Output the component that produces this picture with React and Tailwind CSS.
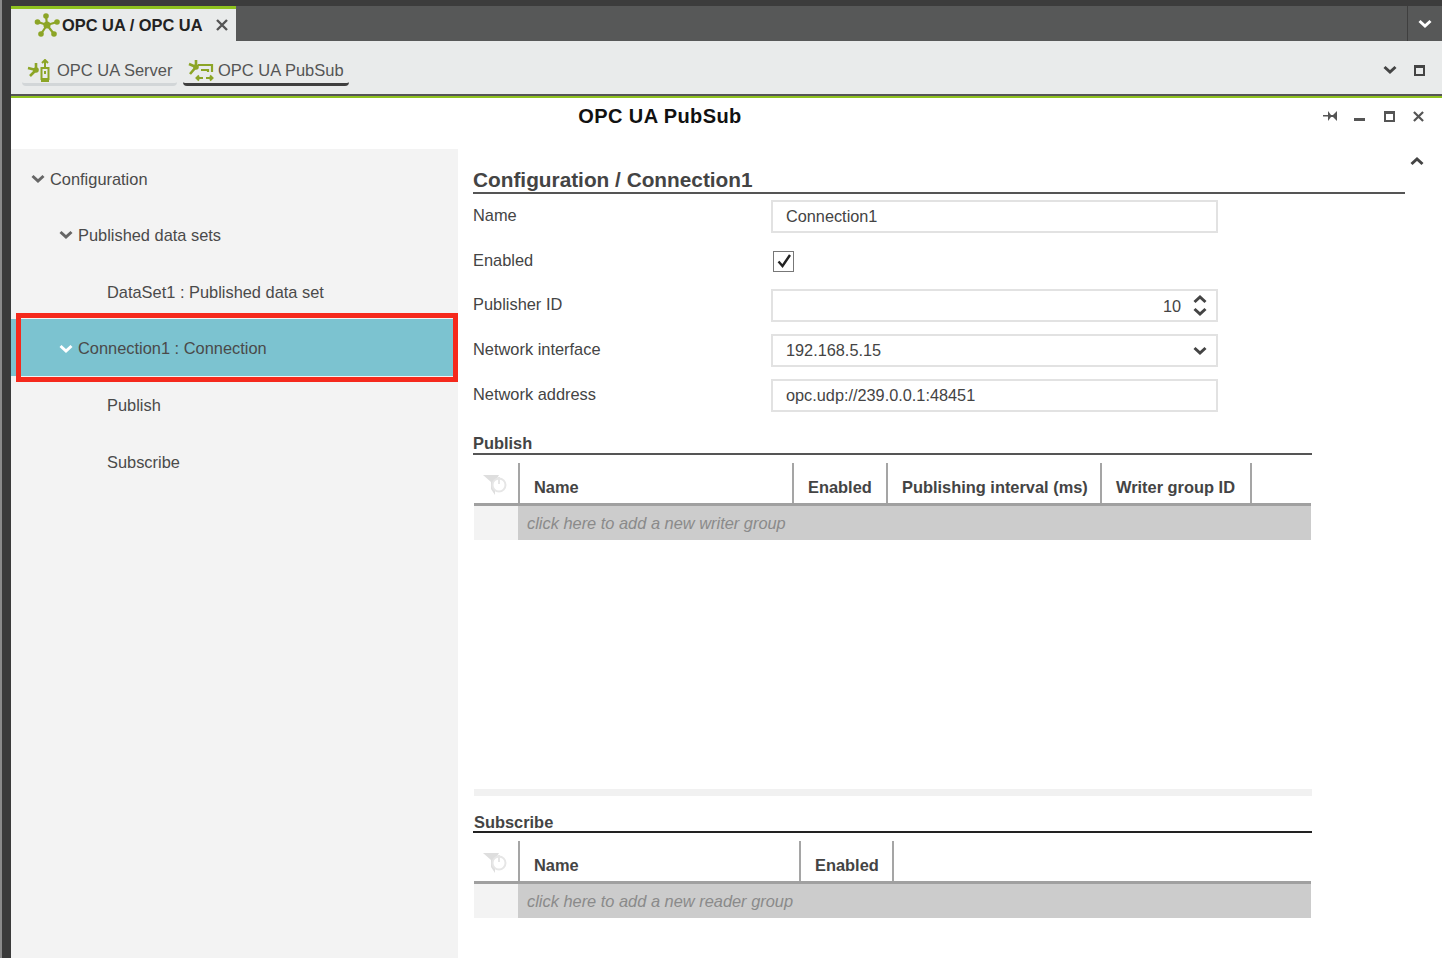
import React from 'react';

const Chev = ({ up, className }) => (
  <svg viewBox="0 0 14 10" className={className} fill="none" stroke="currentColor" strokeWidth="3">
    <path d={up ? 'M1.5 8 L7 3 L12.5 8' : 'M1.5 2 L7 7 L12.5 2'} />
  </svg>
);

const HubIcon = () => (
  <svg viewBox="0 0 26 26" className="w-[26px] h-[26px]" fill="none" stroke="#8ca526" strokeWidth="2.2">
    <path d="M13 13 L12 4 M13 13 L4 10 M13 13 L23 10 M13 13 L7 22 M13 13 L20 22" />
    <g fill="#8ca526" stroke="none">
      <circle cx="13" cy="13" r="3.6" />
      <circle cx="12" cy="4" r="2.8" />
      <circle cx="3.5" cy="10" r="2.8" />
      <circle cx="23" cy="10" r="2.8" />
      <circle cx="7" cy="22" r="2.8" />
      <circle cx="20" cy="22" r="2.8" />
    </g>
  </svg>
);

const ServerIcon = () => (
  <svg viewBox="0 0 24 24" className="w-6 h-6" fill="none" stroke="#8ca526" strokeWidth="2">
    <path d="M1 9 L9 11 M3 17 L9 11 M9 11 V4" strokeWidth="2.6" />
    <circle cx="9" cy="11" r="2.8" fill="#8ca526" stroke="none" />
    <path d="M18 8 V2 M15 4 L18 1 L21 4" />
    <rect x="14.5" y="9" width="7" height="11" />
    <path d="M18 12 V15 M14 22 H22" />
  </svg>
);

const PubSubIcon = () => (
  <svg viewBox="0 0 26 24" className="w-[26px] h-6" fill="none" stroke="#8ca526" strokeWidth="2.2">
    <path d="M1 5 L8 8 M8 1 V8 M2 15 L8 8" strokeWidth="2.6" />
    <circle cx="8" cy="8" r="2.8" fill="#8ca526" stroke="none" />
    <path d="M10 6 H24 V13 M13 11 H20 V13" />
    <path d="M9 19 H15 M11 16.5 L8.5 19 L11 21.5 M18 19 H24 M22 16.5 L24.5 19 L22 21.5" strokeWidth="2" />
  </svg>
);

const FilterIcon = () => (
  <svg viewBox="0 0 24 24" className="w-6 h-6" fill="none">
    <path d="M0 2 H16 L12 9 V22 L8 16 V9 Z" fill="#dedede" />
    <circle cx="16" cy="12" r="6.5" stroke="#e6e6e6" strokeWidth="2" fill="#fff" />
    <path d="M16 4 V11" stroke="#e6e6e6" strokeWidth="2" />
  </svg>
);

const treeRows = [
  { label: 'Configuration', indent: 'pl-[20px]', chev: true },
  { label: 'Published data sets', indent: 'pl-[48px]', chev: true },
  { label: 'DataSet1 : Published data set', indent: 'pl-[96px]' },
  { label: 'Connection1 : Connection', indent: 'pl-[48px]', chev: true, active: true },
  { label: 'Publish', indent: 'pl-[96px]' },
  { label: 'Subscribe', indent: 'pl-[96px]' },
];

const Label = ({ children }) => (
  <div className="w-[298px] text-[16.4px] text-[#444] leading-[20px] mt-[5px]">{children}</div>
);

const boxClass = 'w-[447px] h-[33px] border-2 border-[#e2e2e2] flex items-center px-[13px] text-[16.3px] text-[#444]';

const Table = ({ cols, hint, gap }) => (
  <div className="w-[837px] ml-px">
    <div className={`flex h-[40px] ${gap}`}>
      <div className="w-[44px] flex pl-[9px] pt-[10px]">
        <FilterIcon />
      </div>
      {cols.map((c) => (
        <div
          key={c.name}
          style={{ width: c.w }}
          className="border-l-2 border-[#a5a5a5] pl-[14px] pt-[14px] text-[16.4px] font-bold text-[#444] leading-[20px] whitespace-nowrap last:border-r-2"
        >
          {c.name}
        </div>
      ))}
    </div>
    <div className="h-[3px] bg-[#a0a0a0]" />
    <div className="flex h-[34px]">
      <div className="w-[44px] bg-[#f3f3f3]" />
      <div className="flex-1 bg-[#cccccc] pl-[9px] flex items-center italic text-[16.4px] text-[#8a8a8a]">{hint}</div>
    </div>
  </div>
);

export default function App() {
  return (
    <div className="w-[1442px] h-[958px] flex overflow-hidden bg-white font-['Liberation_Sans',Arial,sans-serif]">
      <div className="w-[11px] shrink-0 bg-[#3a3a3a] border-l-2 border-[#8a8a8a]" />
      <div className="flex-1 flex flex-col min-w-0 relative">
        {/* tab bar */}
        <div className="h-[41px] shrink-0 flex flex-col bg-[#3c3c3c]">
          <div className="h-[6px] shrink-0" />
          <div className="flex-1 flex bg-[#575858]">
            <div className="w-[225px] bg-[#e9ebeb] border-t-[3px] border-[#8fc31f] flex items-center pl-[23px]">
              <HubIcon />
              <span className="text-[16.4px] font-bold text-[#222] ml-[2px] whitespace-nowrap">OPC UA / OPC UA</span>
              <svg viewBox="0 0 12 12" className="w-3 h-3 ml-[13px] text-[#555]" stroke="currentColor" strokeWidth="2.4">
                <path d="M1 1 L11 11 M11 1 L1 11" />
              </svg>
            </div>
            <div className="flex-1" />
            <div className="w-[35px] border-l border-[#3f3f3f] flex items-center justify-center text-white">
              <Chev className="w-[14px] h-[10px]" />
            </div>
          </div>
        </div>

        {/* toolbar */}
        <div className="h-[53px] shrink-0 flex items-start bg-[#e9ebeb] pl-[11px] pr-[17px] pt-[3px]">
          <div className="w-[155px] h-[42px] flex items-center pl-[5px] pt-[14px] border-b-[3px] border-[#d2d6d8] text-[16.5px] text-[#555] rounded-sm">
            <ServerIcon />
            <span className="ml-[6px] whitespace-nowrap">OPC UA Server</span>
          </div>
          <div className="w-[166px] h-[42px] ml-[6px] flex items-center pl-[5px] pt-[14px] border-b-[3px] border-[#3f3f3f] text-[16.5px] text-[#555] rounded-sm">
            <PubSubIcon />
            <span className="ml-[4px] whitespace-nowrap">OPC UA PubSub</span>
          </div>
          <div className="flex-1" />
          <Chev className="w-[14px] h-[10px] text-[#444] mt-[21px] -translate-x-px" />
          <div className="w-[11px] h-[11px] ml-[16px] mt-[21px] border-2 border-t-[3px] border-[#444]" />
        </div>
        <div className="h-[2px] shrink-0 bg-[#555]" />
        <div className="h-[2px] shrink-0 bg-[#8fc31f]" />

        {/* title */}
        <div className="h-[51px] shrink-0 flex items-start relative">
          <div className="w-[1298px] text-center text-[20px] font-bold text-[#111] leading-[24px] pt-[6px] tracking-[0.4px]">OPC UA PubSub</div>
          <div className="flex items-center pt-[12px] text-[#555]">
            <svg viewBox="0 0 16 12" className="w-4 h-3 ml-[14px]" fill="currentColor">
              <path d="M0 5 H5 V6.5 H0 Z M5 1 L8 5 H10 L14 1 V11 L10 7 H8 L5 11 Z" />
            </svg>
            <div className="w-[11px] h-[2.5px] bg-[#555] ml-[15px] mt-[7px]" />
            <div className="w-[11px] h-[11px] ml-[19px] border-2 border-t-[3px] border-[#555]" />
            <svg viewBox="0 0 12 12" className="w-[11px] h-[11px] ml-[18px]" stroke="currentColor" strokeWidth="2.4">
              <path d="M1 1 L11 11 M11 1 L1 11" />
            </svg>
          </div>
        </div>

        <div className="flex-1 flex min-h-0">
          {/* tree */}
          <div className="w-[447px] shrink-0 bg-[#f3f3f3] flex flex-col">
            {treeRows.map((r) => (
              <div
                key={r.label}
                className={`h-[56.67px] shrink-0 flex items-center pt-[3px] ${r.indent} text-[16.4px] text-[#4a4a4a] ${r.active ? 'bg-[#7cc3d0] text-[#3f4f55]' : ''}`}
              >
                {r.chev && (
                  <Chev className={`w-[14px] h-[10px] mr-[5px] ${r.active ? 'text-white' : 'text-[#666]'}`} />
                )}
                <span className="whitespace-nowrap">{r.label}</span>
              </div>
            ))}
          </div>

          {/* details */}
          <div className="flex-1 flex min-w-0">
            <div className="ml-[15px] w-[932px] flex flex-col pt-[17px]">
              <div className="h-[28px] border-b-2 border-[#555] text-[20.8px] font-bold text-[#444] leading-[27px] whitespace-nowrap">
                Configuration / Connection1
              </div>

              <div className="h-[44.7px] pt-[6px] flex">
                <Label>Name</Label>
                <div className={boxClass}>Connection1</div>
              </div>
              <div className="h-[44.7px] pt-[6px] flex">
                <Label>Enabled</Label>
                <div className="w-[21px] h-[21px] ml-[2px] mt-[6px] border border-[#777] flex items-center justify-center">
                  <svg viewBox="0 0 16 16" className="w-4 h-4" fill="none" stroke="#222" strokeWidth="2.4">
                    <path d="M2.5 8.5 L6.5 13 L14 2" />
                  </svg>
                </div>
              </div>
              <div className="h-[44.7px] pt-[6px] flex">
                <Label>Publisher ID</Label>
                <div className={`${boxClass} justify-end pr-[9px]`}>
                  10
                  <span className="flex flex-col gap-[3px] ml-[12px] text-[#444]">
                    <Chev up className="w-[14px] h-[10px]" />
                    <Chev className="w-[14px] h-[10px]" />
                  </span>
                </div>
              </div>
              <div className="h-[44.7px] pt-[6px] flex">
                <Label>Network interface</Label>
                <div className={`${boxClass} justify-between pr-[9px]`}>
                  192.168.5.15
                  <Chev className="w-[14px] h-[10px] text-[#444]" />
                </div>
              </div>
              <div className="h-[44.7px] pt-[6px] flex">
                <Label>Network address</Label>
                <div className={boxClass}>opc.udp://239.0.0.1:48451</div>
              </div>

              {/* publish */}
              <div className="w-[839px] mt-[17px] h-[21px] border-b-2 border-[#555] text-[16.4px] font-bold text-[#444] leading-[19px]">Publish</div>
              <Table
                gap="mt-[8px]"
                hint="click here to add a new writer group"
                cols={[
                  { name: 'Name', w: 274 },
                  { name: 'Enabled', w: 94 },
                  { name: 'Publishing interval (ms)', w: 214 },
                  { name: 'Writer group ID', w: 152 },
                ]}
              />

              <div className="w-[838px] ml-px h-[7px] mt-[249px] bg-[#f1f1f1]" />

              {/* subscribe */}
              <div className="w-[839px] mt-[16px] h-[21px] border-b-2 border-[#222] text-[16.4px] font-bold text-[#444] leading-[20px] pl-px">Subscribe</div>
              <Table
                gap="mt-[8px]"
                hint="click here to add a new reader group"
                cols={[
                  { name: 'Name', w: 281 },
                  { name: 'Enabled', w: 95 },
                ]}
              />
            </div>
            <div className="pt-[7px] pl-[4px]">
              <Chev up className="w-[16px] h-[10px] text-[#444]" />
            </div>
          </div>
        </div>

        {/* red highlight over the selected row */}
        <div className="absolute left-[5px] top-[313px] w-[442px] h-[69px] border-[5px] border-[#f5291c] pointer-events-none" />
      </div>
    </div>
  );
}
